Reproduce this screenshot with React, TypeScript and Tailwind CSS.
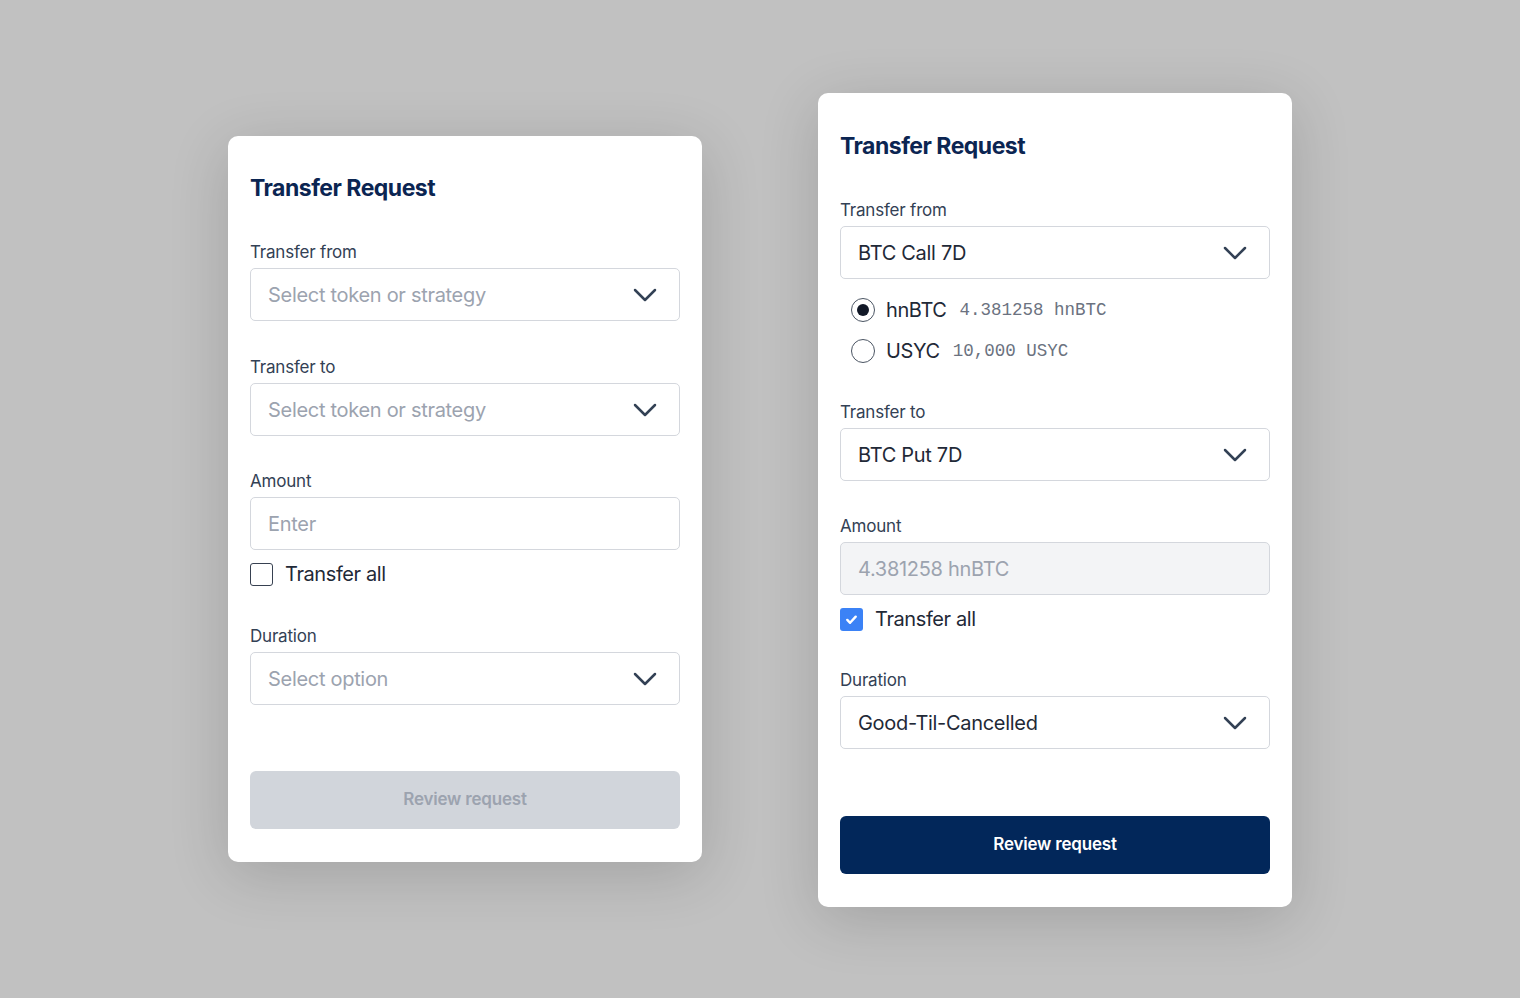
import React from "react";

const sans = "font-['Inter','Noto_Sans',sans-serif]";
const mono = "font-['Liberation_Mono','DejaVu_Sans_Mono',monospace]";

function Chevron() {
  return (
    <svg viewBox="0 0 24 14" className="h-[14px] w-[24px] fill-none stroke-[#334155] stroke-[2.5]" aria-hidden="true">
      <path d="M2 2l10 10L22 2" strokeLinecap="round" strokeLinejoin="round" />
    </svg>
  );
}

function Label({ children }: { children: React.ReactNode }) {
  return <div className="h-6 text-[17px] leading-6 tracking-[-0.2px] text-[#334155]">{children}</div>;
}

function Select({ value, placeholder }: { value?: string; placeholder?: string }) {
  return (
    <div className="mt-1 flex h-[53px] items-center justify-between rounded-[5px] border border-[#d4d7dd] bg-white pl-[17px] pr-[22px]">
      <span className={`text-[20px] tracking-[-0.3px] ${value ? "text-[#1f2937]" : "text-[#9ca3af]"}`}>
        {value ?? placeholder}
      </span>
      <Chevron />
    </div>
  );
}

function Checkbox({ checked }: { checked?: boolean }) {
  return (
    <div className="flex h-6 items-center gap-3">
      {checked ? (
        <span className="flex h-[23px] w-[23px] items-center justify-center rounded-[3px] bg-[#3b82f6]">
          <svg viewBox="0 0 16 16" className="h-[15px] w-[15px] fill-none stroke-white stroke-[2.6]" aria-hidden="true">
            <path d="M3.5 8.5l3 3 6-6.5" strokeLinecap="round" strokeLinejoin="round" />
          </svg>
        </span>
      ) : (
        <span className="h-[23px] w-[23px] rounded-[3px] border-[1.5px] border-[#374151] bg-white" />
      )}
      <span className="text-[20px] tracking-[-0.4px] text-[#1f2937]">Transfer all</span>
    </div>
  );
}

function Radio({ checked, name, amount }: { checked?: boolean; name: string; amount: string }) {
  return (
    <div className="flex h-6 items-center pl-[11px]">
      <span className="flex h-[24px] w-[24px] items-center justify-center rounded-full border-[1.5px] border-[#4b5563] bg-white">
        {checked && <span className="h-[12px] w-[12px] rounded-full bg-[#111827]" />}
      </span>
      <span className="ml-[11px] text-[20px] tracking-[-0.4px] text-[#1f2937]">{name}</span>
      <span className={`ml-[13px] text-[17.5px] text-[#6b7280] ${mono}`}>{amount}</span>
    </div>
  );
}

function Title() {
  return <h2 className="h-8 text-[23px] font-bold leading-8 tracking-[-0.5px] text-[#0b2552]">Transfer Request</h2>;
}

function EmptyForm() {
  return (
    <div className="w-[474px] rounded-[10px] bg-white px-[22px] pb-[33px] pt-[36px] shadow-[0_12px_60px_rgba(0,0,0,0.16)]">
      <Title />
      <div className="mt-9">
        <Label>Transfer from</Label>
        <Select placeholder="Select token or strategy" />
      </div>
      <div className="mt-[34px]">
        <Label>Transfer to</Label>
        <Select placeholder="Select token or strategy" />
      </div>
      <div className="mt-[33px]">
        <Label>Amount</Label>
        <div className="mt-1 flex h-[53px] items-center rounded-[5px] border border-[#d4d7dd] bg-white pl-[17px]">
          <span className="text-[20px] tracking-[-0.3px] text-[#9ca3af]">Enter</span>
        </div>
      </div>
      <div className="mt-3">
        <Checkbox />
      </div>
      <div className="mt-[38px]">
        <Label>Duration</Label>
        <Select placeholder="Select option" />
      </div>
      <button className="mt-[66px] flex h-[58px] w-full items-center justify-center rounded-[6px] bg-[#d1d5db] text-[17px] font-semibold tracking-[-0.2px] text-[#9ca3af]">
        Review request
      </button>
    </div>
  );
}

function FilledForm() {
  return (
    <div className="mt-[2px] w-[474px] rounded-[10px] bg-white px-[22px] pb-[33px] pt-[37px] shadow-[0_12px_60px_rgba(0,0,0,0.16)]">
      <Title />
      <div className="mt-9">
        <Label>Transfer from</Label>
        <Select value="BTC Call 7D" />
      </div>
      <div className="mt-[19px] flex flex-col gap-[17px]">
        <Radio checked name="hnBTC" amount="4.381258 hnBTC" />
        <Radio name="USYC" amount="10,000 USYC" />
      </div>
      <div className="mt-[37px]">
        <Label>Transfer to</Label>
        <Select value="BTC Put 7D" />
      </div>
      <div className="mt-[33px]">
        <Label>Amount</Label>
        <div className="mt-1 flex h-[53px] items-center rounded-[5px] border border-[#d4d7dd] bg-[#f3f4f6] pl-[17px]">
          <span className="text-[20px] tracking-[-0.3px] text-[#9ca3af]">4.381258 hnBTC</span>
        </div>
      </div>
      <div className="mt-3">
        <Checkbox checked />
      </div>
      <div className="mt-[37px]">
        <Label>Duration</Label>
        <Select value="Good-Til-Cancelled" />
      </div>
      <button className="mt-[67px] flex h-[58px] w-full items-center justify-center rounded-[6px] bg-[#02275a] text-[17px] font-semibold tracking-[-0.2px] text-white">
        Review request
      </button>
    </div>
  );
}

export default function App() {
  return (
    <div className={`flex h-[998px] w-full items-center justify-center gap-[116px] bg-[#c1c1c1] ${sans}`}>
      <EmptyForm />
      <FilledForm />
    </div>
  );
}
